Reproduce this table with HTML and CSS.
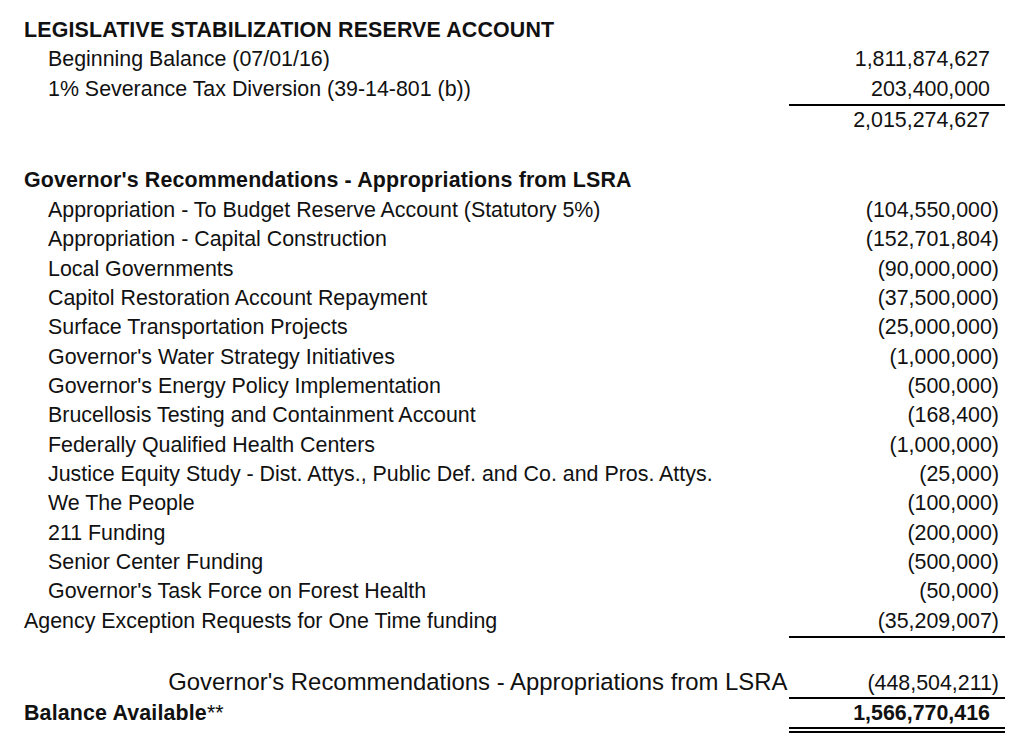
FILE: index.html
```html
<!DOCTYPE html>
<html>
<head>
<meta charset="utf-8">
<link rel="stylesheet" href="styles.css">
</head>
<body>
<div class="sheet">
  <div class="row"><div class="label head">LEGISLATIVE STABILIZATION RESERVE ACCOUNT</div><div class="val"></div></div>
  <div class="row"><div class="label ind">Beginning Balance (07/01/16)</div><div class="val pos">1,811,874,627</div></div>
  <div class="row"><div class="label ind">1% Severance Tax Diversion (39-14-801 (b))</div><div class="val pos rule">203,400,000</div></div>
  <div class="row"><div class="label"></div><div class="val pos">2,015,274,627</div></div>

  <div class="row gap"><div class="label head">Governor's Recommendations - Appropriations from LSRA</div><div class="val"></div></div>
  <div class="row"><div class="label ind">Appropriation - To Budget Reserve Account (Statutory 5%)</div><div class="val neg">(104,550,000)</div></div>
  <div class="row"><div class="label ind">Appropriation - Capital Construction</div><div class="val neg">(152,701,804)</div></div>
  <div class="row"><div class="label ind">Local Governments</div><div class="val neg">(90,000,000)</div></div>
  <div class="row"><div class="label ind">Capitol Restoration Account Repayment</div><div class="val neg">(37,500,000)</div></div>
  <div class="row"><div class="label ind">Surface Transportation Projects</div><div class="val neg">(25,000,000)</div></div>
  <div class="row"><div class="label ind">Governor's Water Strategy Initiatives</div><div class="val neg">(1,000,000)</div></div>
  <div class="row"><div class="label ind">Governor's Energy Policy Implementation</div><div class="val neg">(500,000)</div></div>
  <div class="row"><div class="label ind">Brucellosis Testing and Containment Account</div><div class="val neg">(168,400)</div></div>
  <div class="row"><div class="label ind">Federally Qualified Health Centers</div><div class="val neg">(1,000,000)</div></div>
  <div class="row"><div class="label ind">Justice Equity Study - Dist. Attys., Public Def. and Co. and Pros. Attys.</div><div class="val neg">(25,000)</div></div>
  <div class="row"><div class="label ind">We The People</div><div class="val neg">(100,000)</div></div>
  <div class="row"><div class="label ind">211 Funding</div><div class="val neg">(200,000)</div></div>
  <div class="row"><div class="label ind">Senior Center Funding</div><div class="val neg">(500,000)</div></div>
  <div class="row"><div class="label ind">Governor's Task Force on Forest Health</div><div class="val neg">(50,000)</div></div>
  <div class="row"><div class="label">Agency Exception Requests for One Time funding</div><div class="val neg rule">(35,209,007)</div></div>

  <div class="row total"><div class="label big">Governor's Recommendations - Appropriations from LSRA</div><div class="val neg rule">(448,504,211)</div></div>
  <div class="row balance"><div class="label head">Balance Available<span class="stars">**</span></div><div class="val pos dbl head">1,566,770,416</div></div>
</div>
</body>
</html>
```

FILE: styles.css
```css
html, body {
  margin: 0;
  padding: 0;
  background: #ffffff;
}

.sheet {
  padding: 16px 0 0 24px;
  font-family: "Liberation Sans", Arial, sans-serif;
  font-size: 21.4px;
  color: #111111;
  display: flex;
  flex-direction: column;
}

.row {
  display: flex;
  align-items: flex-start;
  line-height: 29.36px;
}

.label {
  width: 765px;
  white-space: nowrap;
  min-height: 29.36px;
}

.ind {
  padding-left: 24px;
  box-sizing: border-box;
}

.head {
  font-weight: bold;
  letter-spacing: 0.15px;
}

.val {
  width: 216px;
  text-align: right;
  white-space: nowrap;
  min-height: 29.36px;
  box-sizing: content-box;
  letter-spacing: 0;
}

.pos {
  padding-right: 15px;
  width: 201px;
}

.neg {
  padding-right: 6px;
  width: 210px;
}

.rule {
  border-bottom: 2px solid #000000;
}

.gap {
  margin-top: 31px;
}

.total {
  margin-top: 30px;
  align-items: baseline;
  line-height: 28px;
}

.total .label,
.total .val {
  min-height: 0;
}

.total .val {
  line-height: 27px;
}

.big {
  font-size: 23.9px;
  text-align: right;
  padding-right: 1.5px;
  box-sizing: border-box;
}

.balance {
  margin-top: 0.5px;
  line-height: 27px;
}

.balance .label,
.balance .val {
  min-height: 0;
}

.dbl {
  border-bottom: 6px double #000000;
}

.stars {
  font-weight: normal;
  letter-spacing: 0;
}
```
